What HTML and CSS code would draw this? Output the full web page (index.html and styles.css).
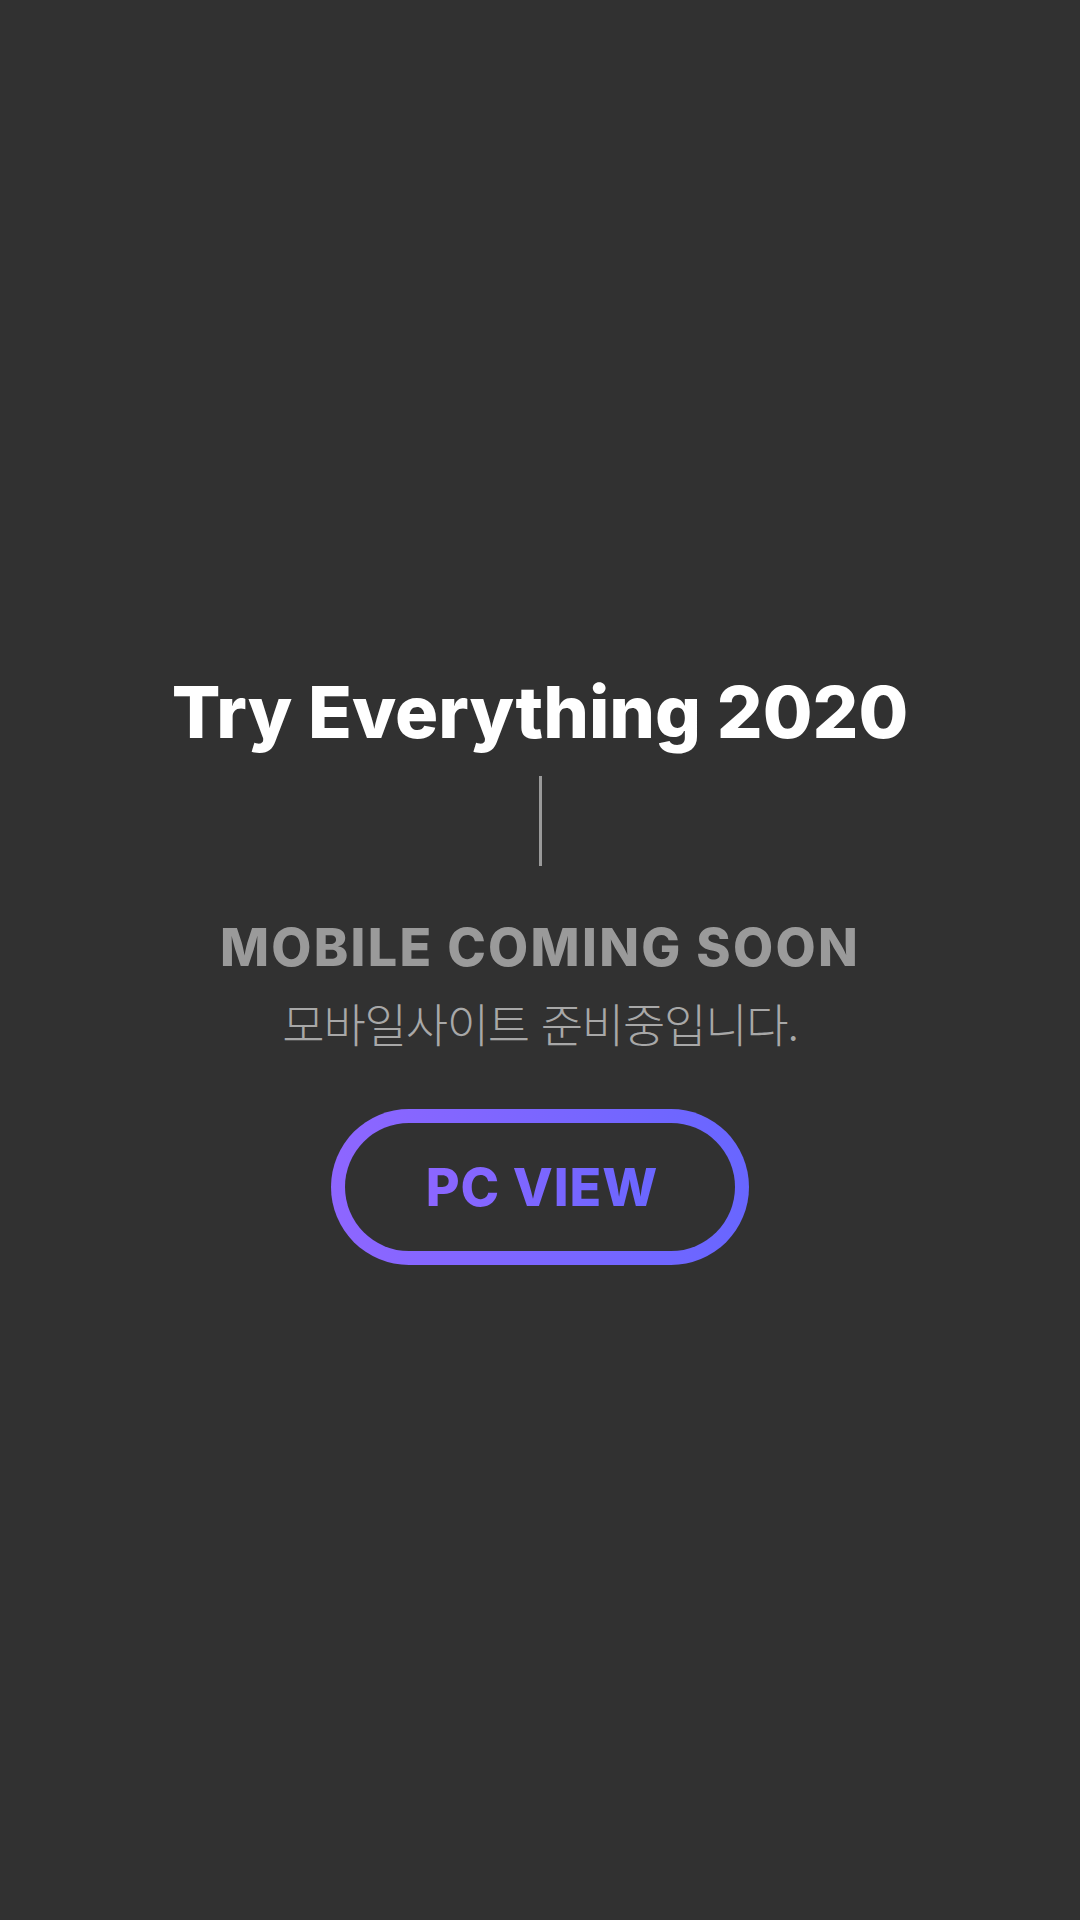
FILE: index.html
```html
<!DOCTYPE html>
<html lang="ko">
<head>
<meta charset="utf-8">
<title>Try Everything 2020</title>
<link rel="stylesheet" href="styles.css">
</head>
<body>
<main class="page">
  <section class="notice">
    <h1 class="title">Try Everything 2020</h1>
    <div class="divider"></div>
    <p class="en">MOBILE COMING SOON</p>
    <p class="ko">모바일사이트 준비중입니다.</p>
    <a class="btn" href="#"><span class="btn-inner"><span class="btn-text">PC VIEW</span></span></a>
  </section>
</main>
</body>
</html>
```
FILE: styles.css
```css
html, body {
  margin: 0;
  padding: 0;
  background: #313131;
}
.page {
  width: 1080px;
  height: 1920px;
  background: #313131;
  display: flex;
  flex-direction: column;
  align-items: center;
}
.notice {
  display: flex;
  flex-direction: column;
  align-items: center;
  padding-top: 668px;
}
.title {
  margin: 0;
  font-family: Inter, "Noto Sans", sans-serif;
  font-weight: 800;
  font-size: 72px;
  line-height: 88px;
  letter-spacing: 0;
  color: #ffffff;
}
.divider {
  width: 3px;
  height: 90px;
  margin-top: 20px;
  background: #9a9a9a;
}
.en {
  margin: 50px 0 0;
  font-family: Inter, "Noto Sans", sans-serif;
  font-weight: 800;
  font-size: 52px;
  line-height: 64px;
  letter-spacing: 2.3px;
  color: #9a9a9a;
}
.ko {
  margin: 14px 0 0;
  font-family: "Noto Sans CJK KR", "Noto Sans", sans-serif;
  font-weight: 300;
  font-size: 46px;
  line-height: 56px;
  letter-spacing: -1.2px;
  color: #a8a8a8;
}
.btn {
  margin-top: 59px;
  box-sizing: border-box;
  width: 418px;
  height: 156px;
  border-radius: 78px;
  padding: 14px;
  background: linear-gradient(to right, #8e66ff, #6866ff);
  display: flex;
  text-decoration: none;
}
.btn-inner {
  flex: 1;
  border-radius: 64px;
  background: #313131;
  display: flex;
  align-items: center;
  justify-content: center;
  padding-left: 4px;
}
.btn-text {
  font-family: Inter, "Noto Sans", sans-serif;
  font-weight: 800;
  font-size: 52px;
  letter-spacing: 1px;
  background: linear-gradient(to right, #8c66ff, #6a66ff);
  -webkit-background-clip: text;
  background-clip: text;
  color: transparent;
}
```
